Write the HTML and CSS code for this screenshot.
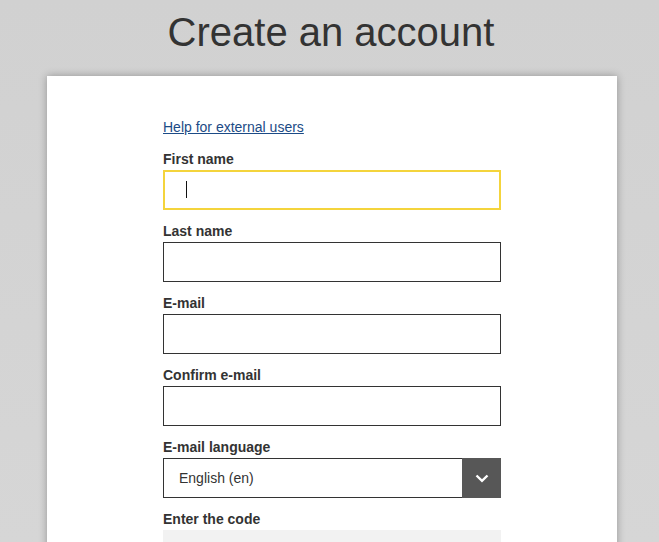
FILE: index.html
```html
<!DOCTYPE html>
<html>
<head>
<meta charset="utf-8">
<link rel="stylesheet" href="styles.css">
</head>
<body>
<h1 class="title">Create an account</h1>
<div class="card">
  <div class="form">
    <a class="help" href="#">Help for external users</a>
    <div class="group first">
      <label class="label">First name</label>
      <div class="input focused"><span class="caret"></span></div>
    </div>
    <div class="group">
      <label class="label">Last name</label>
      <div class="input"></div>
    </div>
    <div class="group">
      <label class="label">E-mail</label>
      <div class="input"></div>
    </div>
    <div class="group">
      <label class="label">Confirm e-mail</label>
      <div class="input"></div>
    </div>
    <div class="group">
      <label class="label">E-mail language</label>
      <div class="select">
        <span class="select-text">English (en)</span>
        <span class="select-btn">
          <svg width="14" height="9" viewBox="0 0 14 9"><path d="M1.5 1.5 L7 6.8 L12.5 1.5" fill="none" stroke="#fff" stroke-width="2.4"/></svg>
        </span>
      </div>
    </div>
    <div class="group">
      <label class="label">Enter the code</label>
      <div class="input code"></div>
    </div>
  </div>
</div>
</body>
</html>
```
FILE: styles.css
```css
html, body {
  margin: 0;
  padding: 0;
  overflow: hidden;
}
body {
  background: linear-gradient(#d1d1d1, #d6d6d6);
  font-family: "Liberation Sans", Arial, sans-serif;
  color: #333;
  height: 542px;
}
.title {
  margin: 0;
  padding: 9px 0 0 3px;
  font-size: 40px;
  line-height: 46px;
  font-weight: normal;
  text-align: center;
  color: #333;
}
.card {
  margin: 21px 42px 0 47px;
  background: #fff;
  box-shadow: 0 0 8px rgba(0, 0, 0, 0.3);
  height: 466px;
  padding-top: 43px;
  display: flex;
  justify-content: center;
}
.form {
  width: 338px;
  display: flex;
  flex-direction: column;
}
.help {
  font-size: 14px;
  line-height: 16px;
  color: #1c4b86;
  text-decoration: underline;
}
.group {
  margin-top: 13px;
  display: flex;
  flex-direction: column;
}
.group.first {
  margin-top: 16px;
}
.label {
  font-size: 14px;
  line-height: 16px;
  font-weight: bold;
  margin-bottom: 3px;
  color: #333;
}
.input {
  height: 40px;
  box-sizing: border-box;
  border: 1px solid #333;
  background: #fff;
  position: relative;
}
.input.focused {
  border: 2px solid #f4d43c;
}
.caret {
  position: absolute;
  left: 21px;
  top: 9px;
  width: 1px;
  height: 17px;
  background: #111;
}
.input.code {
  border: none;
  background: #f2f2f2;
}
.select {
  height: 40px;
  box-sizing: border-box;
  border: 1px solid #333;
  display: flex;
  align-items: stretch;
}
.select-text {
  flex: 1;
  font-size: 14px;
  padding-left: 15px;
  display: flex;
  align-items: center;
  color: #333;
}
.select-btn {
  width: 39px;
  margin: -1px -1px -1px 0;
  background: #575757;
  display: flex;
  align-items: center;
  justify-content: center;
}
```
